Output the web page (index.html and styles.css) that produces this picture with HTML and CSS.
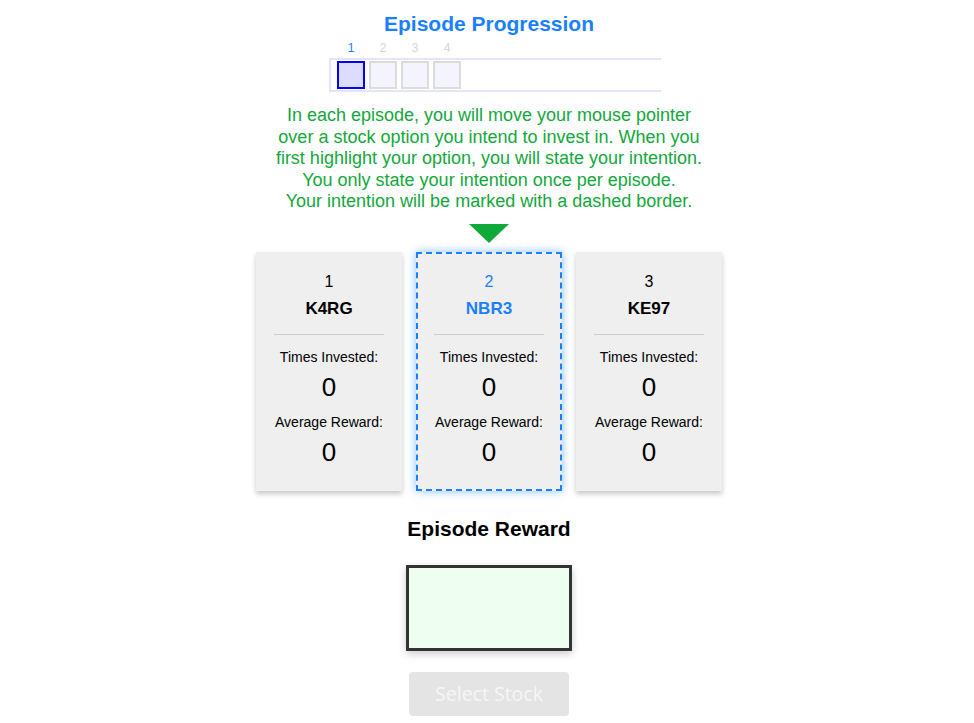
FILE: index.html
```html
<!DOCTYPE html>
<html>
<head>
<meta charset="utf-8">
<link rel="stylesheet" href="styles.css">
</head>
<body>
<div class="page">
  <h1 class="title">Episode Progression</h1>
  <div class="progress">
    <div class="labels">
      <span class="label current">1</span>
      <span class="label">2</span>
      <span class="label">3</span>
      <span class="label">4</span>
    </div>
    <div class="bar">
      <span class="step current"></span>
      <span class="step"></span>
      <span class="step"></span>
      <span class="step"></span>
    </div>
  </div>
  <p class="instructions">In each episode, you will move your mouse pointer<br>over a stock option you intend to invest in. When you<br>first highlight your option, you will state your intention.<br>You only state your intention once per episode.<br>Your intention will be marked with a dashed border.</p>
  <div class="arrow"></div>
  <div class="cards">
    <div class="card">
      <div class="num">1</div>
      <div class="name">K4RG</div>
      <hr class="rule">
      <div class="stat-label">Times Invested:</div>
      <div class="stat-value">0</div>
      <div class="stat-label second">Average Reward:</div>
      <div class="stat-value">0</div>
    </div>
    <div class="card intended">
      <div class="num">2</div>
      <div class="name">NBR3</div>
      <hr class="rule">
      <div class="stat-label">Times Invested:</div>
      <div class="stat-value">0</div>
      <div class="stat-label second">Average Reward:</div>
      <div class="stat-value">0</div>
    </div>
    <div class="card">
      <div class="num">3</div>
      <div class="name">KE97</div>
      <hr class="rule">
      <div class="stat-label">Times Invested:</div>
      <div class="stat-value">0</div>
      <div class="stat-label second">Average Reward:</div>
      <div class="stat-value">0</div>
    </div>
  </div>
  <h2 class="reward-title">Episode Reward</h2>
  <div class="reward-box"></div>
  <button class="select-btn" disabled>Select Stock</button>
</div>
</body>
</html>
```

FILE: styles.css
```css
html, body {
  margin: 0;
  padding: 0;
  background: #ffffff;
}

body {
  font-family: "Liberation Sans", Arial, sans-serif;
  color: #000;
}

.page {
  display: flex;
  flex-direction: column;
  align-items: center;
  padding-left: 4px;
  padding-top: 11px;
}

.title {
  margin: 0;
  font-size: 21px;
  line-height: 25px;
  font-weight: bold;
  color: #1a80ff;
}

.progress {
  width: 320px;
  margin-top: 5px;
}

.labels {
  display: flex;
  padding-left: 8px;
  height: 14px;
}

.label {
  width: 28px;
  margin-right: 4px;
  text-align: center;
  font-size: 12px;
  line-height: 14px;
  color: #d4d4d4;
}

.label.current {
  color: #1a80ff;
}

.bar {
  display: flex;
  width: 324px;
  margin-top: 3px;
  border-top: 2px solid #e4e4ff;
  border-bottom: 2px solid #e4e4ff;
  border-left: 2px solid #e4e4ff;
  padding: 1px 0 1px 6px;
  background: #fff;
}

.step {
  box-sizing: border-box;
  width: 28px;
  height: 28px;
  margin-right: 4px;
  border: 2px solid #dcdcdc;
  background: #f4f4ff;
}

.step.current {
  border-color: #0000ff;
  background: #dcdcff;
}

.instructions {
  margin: 13px 0 0;
  font-size: 18px;
  line-height: 21.6px;
  text-align: center;
  color: #12a83b;
}

.arrow {
  width: 0;
  height: 0;
  margin-top: 11px;
  border-left: 20px solid transparent;
  border-right: 20px solid transparent;
  border-top: 19px solid #0fa83a;
}

.cards {
  display: flex;
  gap: 14px;
  margin-top: 9px;
}

.card {
  box-sizing: border-box;
  width: 146px;
  height: 239px;
  padding-top: 20px;
  background: #efefef;
  box-shadow: 0 3px 5px rgba(0, 0, 0, 0.22);
  text-align: center;
}

.card.intended {
  border: 2px dashed #1a80ff;
  padding-top: 18px;
  box-shadow: 0 0 9px rgba(40, 140, 255, 0.55);
}

.num {
  font-size: 16px;
  line-height: 20px;
}

.name {
  margin-top: 6px;
  font-size: 17px;
  line-height: 22px;
  font-weight: bold;
}

.intended .num,
.intended .name {
  color: #1a80ff;
}

.rule {
  margin: 14px 18px 0;
  border: 0;
  height: 1px;
  background: #cccccc;
}

.intended .rule {
  margin-left: 16px;
  margin-right: 16px;
}

.stat-label {
  margin-top: 13px;
  font-size: 14px;
  line-height: 18px;
}

.stat-label.second {
  margin-top: 11px;
}

.stat-value {
  margin-top: 6px;
  font-size: 26px;
  line-height: 30px;
}

.reward-title {
  margin: 25px 0 0;
  font-size: 21px;
  line-height: 25px;
  font-weight: bold;
}

.reward-box {
  box-sizing: border-box;
  width: 166px;
  height: 86px;
  margin-top: 24px;
  border: 3px solid #333333;
  background: #efffef;
  box-shadow: 0 3px 8px rgba(0, 0, 0, 0.2);
}

.select-btn {
  width: 160px;
  height: 44px;
  margin-top: 21px;
  border: 0;
  border-radius: 4px;
  background: #e4e4e4;
  color: #f6f6f6;
  font-family: "Open Sans", sans-serif;
  font-size: 19.5px;
  padding: 0;
}
```
